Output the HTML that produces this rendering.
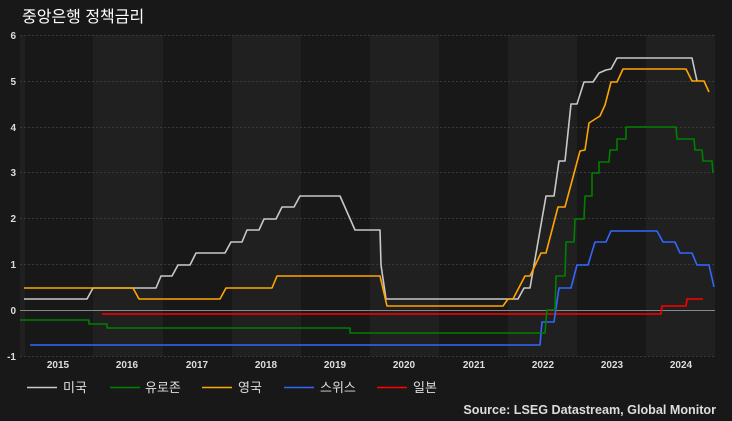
<!DOCTYPE html><html><head><meta charset="utf-8"><style>
body{margin:0;width:732px;height:421px;background:#181818;overflow:hidden;font-family:"Liberation Sans","Noto Sans CJK KR",sans-serif}
svg{display:block}
</style></head><body>
<svg width="732" height="421" xmlns="http://www.w3.org/2000/svg" font-family="Liberation Sans, Noto Sans CJK KR, sans-serif">
<rect width="732" height="421" fill="#181818"/>
<g fill="#202020">
<rect x="20" y="35" width="5" height="321"/>
<rect x="93" y="35" width="70" height="321"/>
<rect x="232" y="35" width="69" height="321"/>
<rect x="370" y="35" width="69" height="321"/>
<rect x="508" y="35" width="69" height="321"/>
<rect x="646" y="35" width="69" height="321"/>
</g>
<g stroke="#3a3a3a" stroke-dasharray="2,2" stroke-width="1">
<line x1="20" x2="715" y1="35.5" y2="35.5"/><line x1="20" x2="715" y1="81.5" y2="81.5"/>
<line x1="20" x2="715" y1="127.5" y2="127.5"/><line x1="20" x2="715" y1="172.5" y2="172.5"/>
<line x1="20" x2="715" y1="218.5" y2="218.5"/><line x1="20" x2="715" y1="264.5" y2="264.5"/>
<line x1="20" x2="715" y1="356.5" y2="356.5"/>
</g>
<line x1="20" x2="715" y1="310.5" y2="310.5" stroke="#888" stroke-width="1"/>
<text x="22" y="22" fill="#fff" font-size="16">중앙은행 정책금리</text>
<g fill="#ddd" font-size="10" font-weight="bold" text-anchor="end">
<text x="16" y="39">6</text><text x="16" y="85">5</text><text x="16" y="131">4</text><text x="16" y="176">3</text><text x="16" y="222">2</text><text x="16" y="268">1</text><text x="16" y="314">0</text><text x="16" y="360">-1</text>
</g>
<g fill="#ddd" font-size="10" font-weight="bold" text-anchor="middle">
<text x="58" y="368">2015</text><text x="127" y="368">2016</text><text x="197" y="368">2017</text><text x="266" y="368">2018</text><text x="335" y="368">2019</text><text x="404" y="368">2020</text><text x="474" y="368">2021</text><text x="543" y="368">2022</text><text x="612" y="368">2023</text><text x="681" y="368">2024</text>
</g>
<g fill="none" stroke-width="1.6" stroke-linejoin="round">
<polyline stroke="#ff0000" points="102,314 661,314 662,306 686,306 687,299 703,299"/>
<polyline stroke="#3366ff" points="30,345 540,345 542,322 554,322 559,288 571,288 577,265 588,265 595,242 606,242 611,231 657,231 663,242 675,242 680,253 692,253 697,265 709,265 714,287"/>
<polyline stroke="#008000" points="20,320 89,320 89,324 107,324 107,328 350,328 350,333 545,333 546,320 547,310 555,310 556,276 565,276 566,242 574,242 575,219 584,219 585,196 592,196 592,173 599,173 599,162 609,162 610,150 617,150 617,139 626,139 626,127 676,127 677,139 694,139 695,150 702,150 703,161 712,161 713,173"/>
<polyline stroke="#c8c8c8" points="24,299 87,299 93,288 156,288 161,276 172,276 178,265 190,265 196,253 225,253 231,242 242,242 247,230 259,230 264,219 276,219 282,207 294,207 300,196 340,196 355,230 380,230 381,265 386,299 518,299 524,288 530,288 546,196 554,196 559,161 565,161 571,104 577,104 584,82 593,82 599,73 606,70 611,69 617,58 692,58 697,81"/>
<polyline stroke="#ffa500" points="24,288 133,288 139,299 220,299 226,288 272,288 277,276 380,276 387,306 503,306 508,299 513,299 525,276 530,276 541,253 546,253 558,207 565,207 580,151 585,150 589,123 600,116 605,105 611,82 617,82 623,69 686,69 692,81 704,81 709,92"/>
</g>
<g stroke-width="1.6">
<line x1="27" x2="57" y1="387.5" y2="387.5" stroke="#c8c8c8"/>
<line x1="110" x2="140" y1="387.5" y2="387.5" stroke="#008000"/>
<line x1="202" x2="232" y1="387.5" y2="387.5" stroke="#ffa500"/>
<line x1="284" x2="314" y1="387.5" y2="387.5" stroke="#3366ff"/>
<line x1="377" x2="407" y1="387.5" y2="387.5" stroke="#ff0000"/>
</g>
<g fill="#ddd" font-size="13">
<text x="63" y="392">미국</text><text x="145" y="392">유로존</text><text x="238" y="392">영국</text><text x="320" y="392">스위스</text><text x="413" y="392">일본</text>
</g>
<text x="716" y="414" fill="#ddd" font-size="12.6" font-weight="bold" text-anchor="end">Source: LSEG Datastream, Global Monitor</text>
</svg>
</body></html>
